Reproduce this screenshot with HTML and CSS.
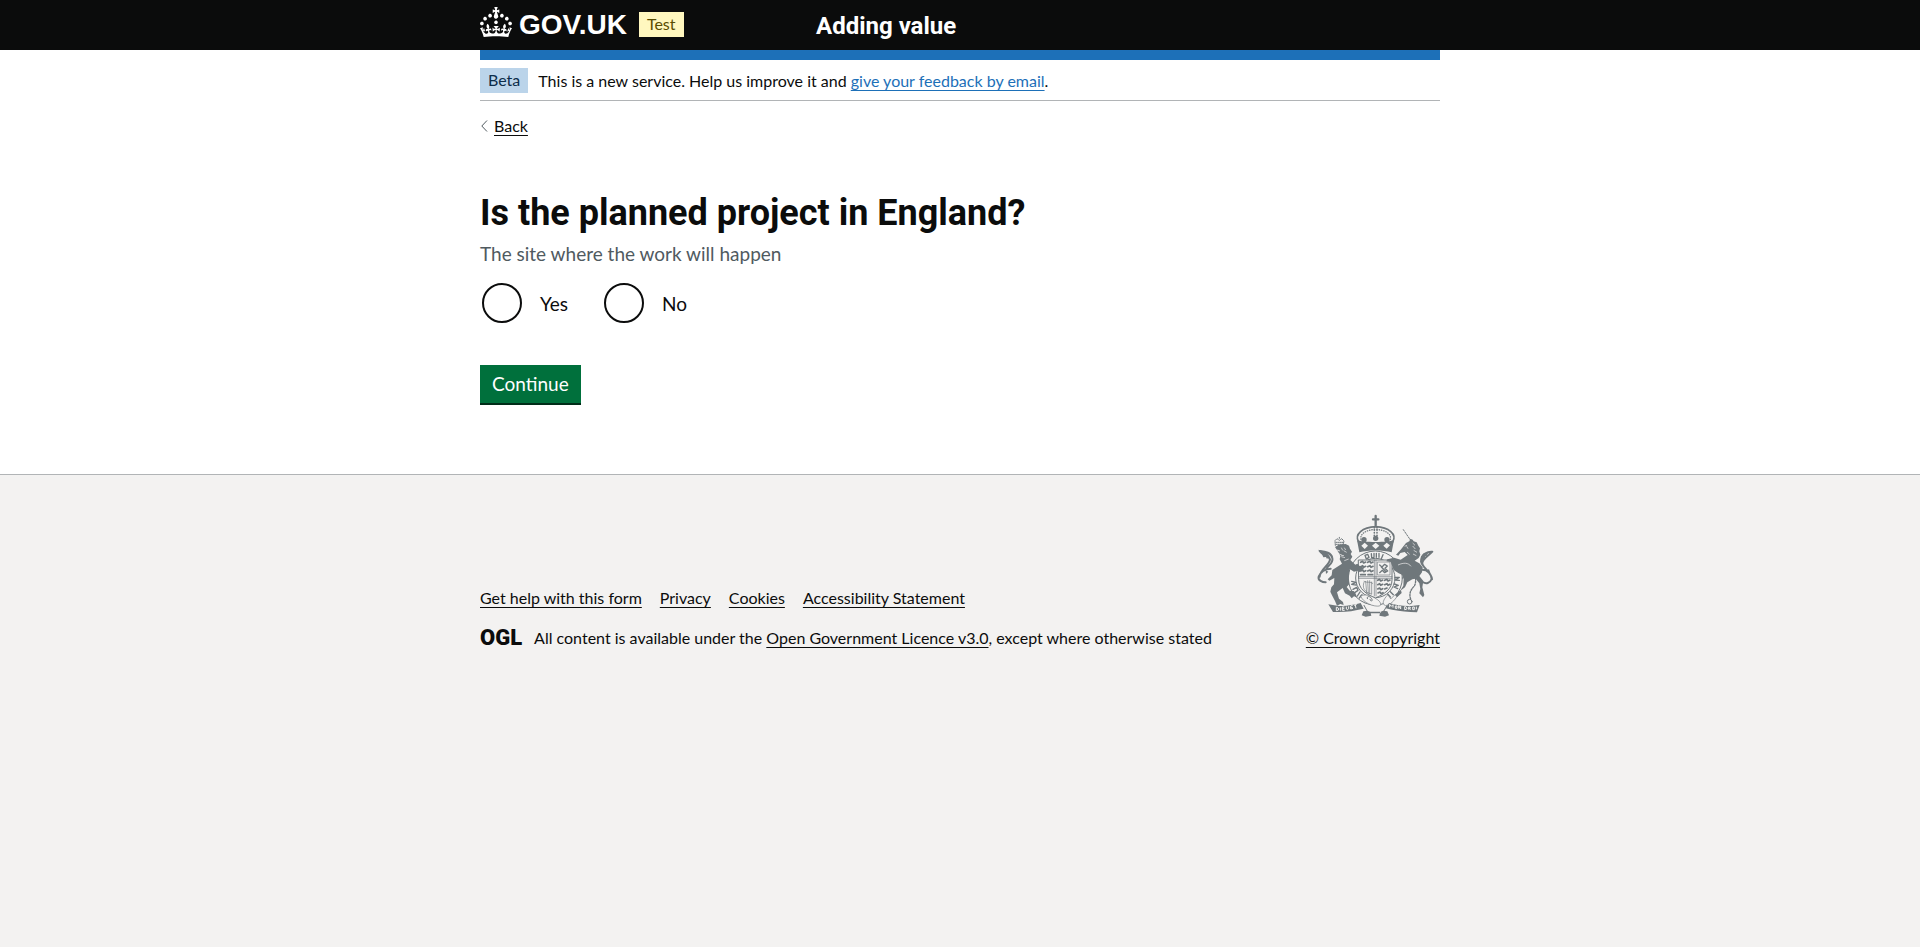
FILE: index.html
```html
<!DOCTYPE html>
<html lang="en">
<head>
<meta charset="utf-8">
<title>Is the planned project in England? - Adding value</title>
<meta name="viewport" content="width=device-width, initial-scale=1">
<link rel="stylesheet" href="styles.css">
</head>
<body>
<header class="header">
  <div class="container header-row">
    <div class="header-brand">
      <a class="logo" href="#" aria-label="GOV.UK">
        <svg class="crown" viewBox="0 0 32 30" aria-hidden="true"><path fill="currentColor" d="M22.6 10.4c-1 .4-2-.1-2.4-1-.4-.9.1-2 1-2.4.9-.4 2 .1 2.4 1s-.1 2-1 2.4m-5.9 6.7c-.9.4-2-.1-2.4-1-.4-.9.1-2 1-2.4.9-.4 2 .1 2.4 1s-.1 2-1 2.4m10.8-3.7c-1 .4-2-.1-2.4-1-.4-.9.1-2 1-2.4.9-.4 2 .1 2.4 1s0 2-1 2.4m3.3 4.8c-1 .4-2-.1-2.4-1-.4-.9.1-2 1-2.4.9-.4 2 .1 2.4 1s-.1 2-1 2.4M17 4.7l2.3 1.2V2.5l-2.3.7-.2-.2.9-3h-3.4l.9 3-.2.2c-.1.1-2.3-.7-2.3-.7v3.4L15 4.7c.1.1.1.2.2.2l-1.3 4c-.1.2-.1.4-.1.6 0 1.1.8 2 1.9 2.2h.7c1-.2 1.9-1.1 1.9-2.1 0-.2 0-.4-.1-.6l-1.3-4c-.1-.2 0-.2.1-.3m-7.6 5.7c.9.4 2-.1 2.4-1 .4-.9-.1-2-1-2.4-.9-.4-2 .1-2.4 1s0 2 1 2.4m-5 3c.9.4 2-.1 2.4-1 .4-.9-.1-2-1-2.4-.9-.4-2 .1-2.4 1s.1 2 1 2.4m-3.2 4.8c.9.4 2-.1 2.4-1 .4-.9-.1-2-1-2.4-.9-.4-2 .1-2.4 1s0 2 1 2.4m14.8 11c4.4 0 8.6.3 12.3.8 1.1-4.5 2.4-7 3.7-8.8l-2.5-.9c.2 1.3.3 1.9 0 2.7-.4-.4-.8-1.1-1.1-2.3l-1.2 4c.7-.5 1.3-.8 2-.9-1.1 2.5-2.6 3.1-3.5 3-1.1-.2-1.7-1.2-1.5-2.1.3-1.2 1.5-1.5 2.1-.1 1.1-2.3-.8-3-2-2.3 1.9-1.9 2.1-3.5.6-5.6-2.1 1.6-2.1 3.2-1.2 5.5-1.2-1.4-3.2-.6-2.5 1.6.9-1.4 2.1-.5 1.9.8-.2 1.1-1.7 2.1-3.5 1.9-2.7-.2-2.9-2.1-2.9-3.6.7-.1 1.9.5 2.9 1.9l.4-4.3c-1.1 1.1-2.1 1.4-3.2 1.4.4-1.2 2.1-3 2.1-3h-5.4s1.7 1.9 2.1 3c-1.1 0-2.1-.2-3.2-1.4l.4 4.3c1-1.4 2.2-2 2.9-1.9-.1 1.5-.2 3.4-2.9 3.6-1.9.2-3.4-.8-3.5-1.9-.2-1.3 1-2.2 1.9-.8.7-2.3-1.2-3-2.5-1.6.9-2.2.9-3.9-1.2-5.5-1.5 2-1.3 3.7.6 5.6-1.2-.7-3.1 0-2 2.3.6-1.4 1.8-1.1 2.1.1.2.9-.3 1.9-1.5 2.1-.9.2-2.4-.5-3.5-3 .6 0 1.2.3 2 .9l-1.2-4c-.3 1.1-.7 1.9-1.1 2.3-.3-.8-.2-1.4 0-2.7l-2.9.9C1.3 23 2.6 25.5 3.7 30c3.7-.5 7.9-.8 12.3-.8"/></svg>
        <span class="logo-text">GOV.UK</span>
      </a>
      <strong class="tag tag-yellow">Test</strong>
    </div>
    <a class="service-name" href="#">Adding value</a>
  </div>
</header>

<div class="container">
  <div class="blue-bar"></div>
  <div class="phase-banner">
    <strong class="tag tag-blue">Beta</strong>
    <span>This is a new service. Help us improve it and <a class="link" href="#">give your feedback by email</a>.</span>
  </div>
  <a class="back-link" href="#">
    <svg class="chevron" viewBox="0 0 7 12" aria-hidden="true"><path d="M6 .5.8 6 6 11.5" fill="none" stroke="#505a5f"/></svg>
    <span class="back-text">Back</span>
  </a>
  <main class="main">
    <form>
      <fieldset class="fieldset" aria-describedby="hint">
        <legend><h1 class="heading">Is the planned project in England?</h1></legend>
        <div class="hint" id="hint">The site where the work will happen</div>
        <div class="radios">
          <div class="radio-item">
            <input class="radio" type="radio" name="england" id="yes">
            <label class="radio-label" for="yes">Yes</label>
          </div>
          <div class="radio-item">
            <input class="radio" type="radio" name="england" id="no">
            <label class="radio-label" for="no">No</label>
          </div>
        </div>
      </fieldset>
      <button class="button" type="button">Continue</button>
    </form>
  </main>
</div>

<footer class="footer">
  <div class="container footer-row">
    <div class="footer-meta">
      <ul class="footer-links">
        <li><a class="footer-link" href="#">Get help with this form</a></li>
        <li><a class="footer-link" href="#">Privacy</a></li>
        <li><a class="footer-link" href="#">Cookies</a></li>
        <li><a class="footer-link" href="#">Accessibility Statement</a></li>
      </ul>
      <div class="licence">
        <span class="ogl">OGL</span>
        <span>All content is available under the <a class="footer-link" href="#">Open Government Licence v3.0</a>, except where otherwise stated</span>
      </div>
    </div>
    <a class="copyright" href="#">
      <svg class="crest" viewBox="75 44 375 312" aria-hidden="true">
        <g fill="none" stroke="#6f777b" stroke-linecap="round" stroke-linejoin="round">
          <path stroke-width="5" d="M206 128c-14-24 12-44 51-46 39 2 65 22 51 46"/>
          <path stroke-width="4" stroke-dasharray="1 6" d="M213 120c-4-16 14-28 44-30 30 2 48 14 44 30"/>
          <path stroke-width="5" stroke-dasharray="1 7" d="M253 84v32M261 84v32"/>
          <path stroke-width="7" d="M257 50v28M249 60h16"/>
          <circle cx="256" cy="236" r="81" stroke-width="3"/>
          <circle cx="256" cy="236" r="59" stroke-width="3"/>
          <path stroke-width="4" d="M185 246l13 3-13 6 14 2M189 270l11-6 4 9-10 7M202 290l8-12M208 296l8-10M229 179l-4-11 8-3 4 9-6 4M244 163l1 12 7-1v-12M259 162v12M267 162v12M279 166l-5 12M315 234h13l-13 8 13 1M313 254l12 4-13 5 11 5M301 277l9 9M293 284l8 9"/>
          <path stroke-width="3" fill="#f3f2f1" d="M206 182h100v60c0 27-22 42-50 54-28-12-50-27-50-54z"/>
          <path stroke-width="2" d="M253 182v108M258 182v108M206 232h100M206 237h100M263 188h37v39h-37z"/>
          <path stroke-width="5" d="M212 189l6-3 3 5 6-3m6 1 7-3 3 5 6-3M212 202l6-3 3 5 6-3m6 1 7-3 3 5 6-3M212 215l6-3 3 5 6-3m6 1 7-3 3 5 6-3M212 226h14m8 0h14M263 243l6-3 3 5 6-3m6 1 7-3 3 5 6-3M263 256l6-3 3 5 6-3m6 1 7-3 3 5 6-3M263 269l6-3 3 5 6-3m6 1 7-3M264 281l6-3 3 5 6-3"/>
          <path stroke-width="4" d="m269 197 7 6 8-8 8 5-7 7 8 8-9 5-7-7-8 7M274 203l12 12"/>
          <path stroke-width="2" d="M222 249c-6 15 0 30 22 35M227 246l3 34M233 244l2 38M239 244v40M245 248v36M222 246c10 6 20-1 26 6"/>
          <path stroke-width="6" d="M122 208c-17 0-31 11-36 24-3 11 11 17 21 17M89 232c3-24 29-34 31-51-2-16-20-8-31-26 18 2 35 5 38 21 4 17-15 23-19 35"/>
          <path stroke-width="6" d="M397 211c16 0 27 13 28 28-5 13-17 16-27 9M426 240c-2-22-23-29-29-46-2-16 14-20 30-37-5 1-22 0-31 15-5 13-4 18 4 28"/>
          <path stroke-width="3" stroke-dasharray="5 4" d="m340 91 24 35"/>
          <path stroke-width="4" stroke-dasharray="5 4" d="M389 203c-19 17-7 43-16 57-12 12-17 25-10 42"/>
          <circle cx="359" cy="307" r="7" stroke-width="3"/>
          <path stroke-width="2" fill="#f3f2f1" d="M212 290c12-7 31-2 46 8 15 9 16 17 11 22-18 3-50-9-57-30zM293 287c-14 14-18 27-7 32 15-3 26-13 39-33l-11 1-11 11z"/>
          <path stroke-width="3" d="M232 298c-3-8 8-9 13 0s-5 9-5 2M222 318l10 18M291 319l-10 17"/>
          <path stroke-width="3" stroke-dasharray="3 3" d="M136 138l-1-14 6-6 7 5 7-5 7 7-3 13M148 117v-4M139 129h20M139 135h20"/>
        </g>
        <g fill="#6f777b">
          <path fill-rule="evenodd" d="M201 122c14 8 97 8 111 0l-7 37c-27-7-70-7-97 0zm13 17 10 10 10-10-10-9zm32 0 11 10 11-10-11-9zm34 0 10 9 10-10-10-8z"/>
          <circle cx="222" cy="121" r="8"/><circle cx="257" cy="117" r="8"/><circle cx="291" cy="121" r="8"/>
          <path d="m135 143 10-6 13-2 9-1 10 5 3 9 6 9-4 7 5 8-6 10 15 14 6-3 7 7 8 2 5 7-8 3-4 7-7-5-11 3-13-8-3 29 2 16-8 9 9 11 12 1 5 6 5 13-9-3-7 6-6-8-14-7-7-16-5 4-12 9 6 19 12 10 2 9-10-3-10 5-6-14-9-17-5-11 3-13 8-9 1-19-15 8-5-4 12-12 2-16 29-19-7-13 2-9-3-8z"/>
          <path d="m332 151 16-20 10-5 3-8 7 3 3 5 9 3 5 10 5 8-2 9 3 10-5 10-12 8 14 8 10 12-2 15-8 11 12 15-3 19 6 23-4 7-11-12 3-13-3-17-11-14-10 2-15 9-7 15-12 9 2 8-14 13-6-8 17-14 8-13 1-19-5-14-10-4-15-10-9-24-13-2 3-6 20-5 20 6 21-14-9-9-13 3-6 8-7-3z"/>
          <path d="M115 315l27 4c25 3 44-2 70-8l9 17c-27 6-49 10-74 10h-18zM389 317l-25 3c-25 1-44-2-67-9l-10 16c27 7 49 10 74 11l20 1z"/>
          <path d="M215 348l5-12 12-2 9 3 3 12-17 3zM297 348l-5-12-12-2-9 3-3 12 17 3zM238 337h36l-4 5h-28z"/>
          <path d="M84 151l10 9 6 14 8-1 3 6 8-8-12-14zM430 152l-15 8-5 10-5 1 2 8-10 3-4-9 9-12 10 1zM107 213l8 4-7 7zM406 214l11-4 4 11z"/>
        </g>
        <g fill="none" stroke="#f3f2f1" stroke-width="2">
          <path d="m140 152 8 3m6-10 4 8m-10 11 9 4m4-14 9 5m-16 13 11 3m-2 9 13-5m-33-27 7 3m13-10 4 7m-13 16 8 1M344 141l7-3m17-7 7 7m-7 2 8 9m-5 4 10 6m-12 5 10 5m-29-28 4 7m-3 10 8 7M324 197c17-8 31-7 39 4"/>
          <path stroke-width="3" d="M139 324v10q9-1 7-5-1-5-7-5M151 324v10M163 323h-6v10h7m-7-5h6M169 322v7q2 5 7-1v-7M188 318l-6 2v9l7-2m-7-2h6M192 318l8-3m-4 2 2 10M299 324v-9l5 6 5-5v9M316 320v7h5v-7zM326 328v-9l6 10v-9M344 322v9q8 0 7-5-2-5-7-4M356 331v-8q8 0 5 4h-4l5 5M368 323v8h5v-8zM379 322v8"/>
        </g>
      </svg>
      <span class="copyright-text">© Crown copyright</span>
    </a>
  </div>
</footer>
</body>
</html>
```
FILE: styles.css
```css
* { box-sizing: border-box; }

body {
  margin: 0;
  min-height: 100vh;
  display: flex;
  flex-direction: column;
  background: #fff;
  color: #0b0c0c;
  font-family: Lato, Roboto, "Liberation Sans", sans-serif;
  font-size: 16px;
  font-variant-ligatures: none;
  line-height: 20px;
}

.container {
  width: calc(100% - 60px);
  max-width: 960px;
  margin: 0 auto;
}

.header { background: #0b0c0c; color: #fff; }

.header-row { display: flex; height: 50px; }

.header-brand {
  display: flex;
  align-items: center;
  gap: 12px;
  width: 35%;
  padding-bottom: 2px;
}

.logo {
  display: flex;
  align-items: center;
  gap: 7px;
  color: #fff;
  text-decoration: none;
}

.crown { display: block; width: 32px; height: 30px; margin-bottom: 4px; }

.logo-text {
  padding-top: 2px;
  font-family: "Liberation Sans", Arial, sans-serif;
  font-size: 28px;
  font-weight: 700;
  line-height: 32px;
}

.service-name {
  padding-top: 1px;
  color: #fff;
  font-family: Roboto, sans-serif;
  font-size: 24px;
  font-weight: 700;
  line-height: 50px;
  text-decoration: none;
}

.tag {
  padding: 2px 8px 3px;
  font-weight: 400;
}

.tag-yellow { background: #fff7bf; color: #594d00; }

.tag-blue { background: #bbd4ea; color: #0c2d4a; }

.blue-bar { height: 10px; background: #1d70b8; }

.phase-banner {
  display: flex;
  align-items: center;
  gap: 10px;
  padding: 8px 0 7px;
  border-bottom: 1px solid #b1b4b6;
}

.link {
  color: #1d70b8;
  text-decoration-thickness: 1px;
  text-underline-offset: 3px;
}

.back-link {
  display: inline-flex;
  align-items: center;
  gap: 6px;
  margin-top: 15px;
  padding-left: 1px;
  color: #0b0c0c;
  text-decoration: none;
}

.chevron { width: 7px; height: 12px; }

.back-text {
  text-decoration: underline;
  text-decoration-thickness: 1px;
  text-underline-offset: 3px;
}

.main { padding: 57px 0 71px; }

.fieldset { margin: 0 0 40px; padding: 0; border: 0; }

.fieldset legend { padding: 0; }

.heading {
  margin: 0 0 8px;
  font-family: Roboto, sans-serif;
  font-size: 36px;
  font-weight: 700;
  line-height: 40px;
}

.hint {
  margin-bottom: 15px;
  color: #505a5f;
  font-size: 19px;
  line-height: 25px;
}

.radios { display: flex; gap: 36px; padding: 2px; }

.radio-item { display: flex; align-items: center; gap: 18px; }

.radio {
  appearance: none;
  width: 40px;
  height: 40px;
  margin: 0;
  border: 2px solid #0b0c0c;
  border-radius: 50%;
  background: #fff;
}

.radio:checked { box-shadow: inset 0 0 0 8px #fff; background: #0b0c0c; }

.radio-label { font-size: 19px; line-height: 25px; }

.button {
  display: block;
  padding: 9px 12px 10px;
  border: 0;
  background: #00703c;
  box-shadow: 0 2px 0 #002d18;
  color: #fff;
  font-family: inherit;
  font-size: 19px;
  line-height: 19px;
}

.footer {
  flex: 1;
  border-top: 1px solid #b1b4b6;
  background: #f3f2f1;
}

.footer-row {
  display: flex;
  justify-content: space-between;
  align-items: flex-end;
  padding-top: 39px;
}

.footer-links {
  display: flex;
  gap: 18px;
  margin: 0 0 20px;
  padding: 0;
  list-style: none;
}

.footer-link {
  color: inherit;
  text-decoration-thickness: 1px;
  text-underline-offset: 3px;
}

.licence { display: flex; align-items: center; gap: 12px; }

.ogl {
  font-family: Roboto, sans-serif;
  font-size: 22px;
  font-weight: 900;
  line-height: 16px;
}

.copyright {
  display: flex;
  flex-direction: column;
  align-items: flex-end;
  gap: 10px;
  color: inherit;
  text-decoration-thickness: 1px;
  text-underline-offset: 3px;
}

.crest { width: 125px; height: 104px; }
```
